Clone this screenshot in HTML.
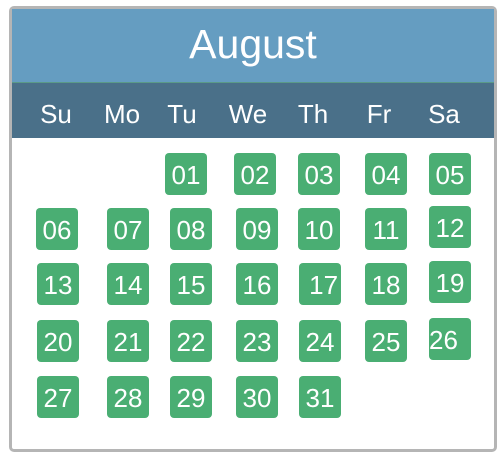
<!DOCTYPE html><html><head><style>
body{margin:0;width:504px;height:469px;background:#fff;position:relative;font-family:"Liberation Sans",sans-serif;overflow:hidden}
.box{position:absolute;left:9px;top:6px;width:482px;height:440px;border:3px solid #b5b5b5;border-radius:5px;background:#fff;overflow:hidden}
.hd{position:absolute;left:12px;top:9px;width:482px;height:73px;background:#659dc1;color:#fff;font-size:41px;text-align:center;line-height:70px}
.dw{position:absolute;left:12px;top:82px;width:482px;height:56px;background:#4a7089;border-top:1px solid #5a9a88;box-sizing:border-box}
.dw span{position:absolute;top:16px;color:#fff;font-size:26px;width:60px;text-align:center}
.d{position:absolute;width:42px;height:42px;background:#4aae73;border-radius:4px;color:#fff;font-size:26px;line-height:44px;text-align:center}
</style></head><body>
<div class="box"></div>
<div class="hd">August</div>
<div class="dw"><span style="left:14px">Su</span><span style="left:80px">Mo</span><span style="left:140px">Tu</span><span style="left:206px">We</span><span style="left:271px">Th</span><span style="left:337px">Fr</span><span style="left:402px">Sa</span></div>
<div class="d" style="left:165px;top:153px">01</div>
<div class="d" style="left:234px;top:153px">02</div>
<div class="d" style="left:298px;top:153px">03</div>
<div class="d" style="left:365px;top:153px">04</div>
<div class="d" style="left:429px;top:153px">05</div>
<div class="d" style="left:36px;top:208px">06</div>
<div class="d" style="left:107px;top:208px">07</div>
<div class="d" style="left:170px;top:208px">08</div>
<div class="d" style="left:236px;top:208px">09</div>
<div class="d" style="left:298px;top:208px">10</div>
<div class="d" style="left:365px;top:208px">11</div>
<div class="d" style="left:429px;top:206px">12</div>
<div class="d" style="left:37px;top:263px">13</div>
<div class="d" style="left:107px;top:263px">14</div>
<div class="d" style="left:170px;top:263px">15</div>
<div class="d" style="left:236px;top:263px">16</div>
<div class="d" style="left:299px;top:263px">&nbsp;17</div>
<div class="d" style="left:365px;top:263px">18</div>
<div class="d" style="left:429px;top:261px">19</div>
<div class="d" style="left:37px;top:320px">20</div>
<div class="d" style="left:107px;top:320px">21</div>
<div class="d" style="left:170px;top:320px">22</div>
<div class="d" style="left:236px;top:320px">23</div>
<div class="d" style="left:299px;top:320px">24</div>
<div class="d" style="left:365px;top:320px">25</div>
<div class="d" style="left:429px;top:318px;text-align:left">26</div>
<div class="d" style="left:37px;top:376px">27</div>
<div class="d" style="left:107px;top:376px">28</div>
<div class="d" style="left:170px;top:376px">29</div>
<div class="d" style="left:236px;top:376px">30</div>
<div class="d" style="left:299px;top:376px">31</div>
</body></html>
